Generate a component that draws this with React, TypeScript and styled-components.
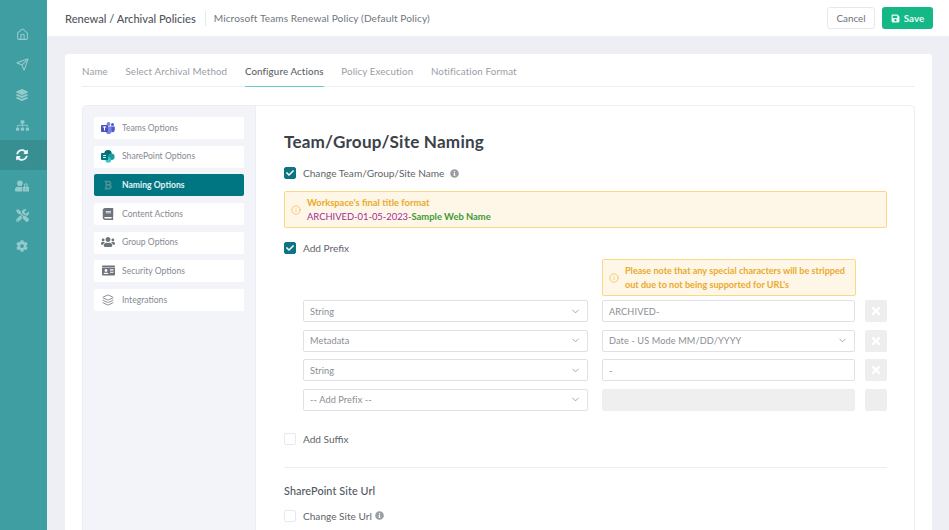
import React from "react";
import styled, { createGlobalStyle } from "styled-components";
import { FaSitemap, FaSyncAlt, FaUserLock, FaTools, FaCog, FaLayerGroup, FaBook, FaUsers, FaIdCard, FaBold, FaSave, FaTimes, FaInfoCircle, FaCheck } from "react-icons/fa";
import { Home, Send, Layers, ChevronDown, Info } from "lucide-react";

const GlobalStyle = createGlobalStyle`
  * { box-sizing: border-box; }
  html, body { margin: 0; padding: 0; background: #eeeff5; }
  body { font-family: "Lato", "Noto Sans", sans-serif; }
`;

const Page = styled.div`
  display: flex;
  width: 949px;
  height: 530px;
  overflow: hidden;
`;

const Rail = styled.nav`
  flex: 0 0 47px;
  background: #3e9ea1;
  padding-top: 19px;
  display: flex;
  flex-direction: column;
`;

const RailItem = styled.div<{ $active?: boolean }>`
  height: 30.3px;
  padding-right: 3px;
  display: flex;
  align-items: center;
  justify-content: center;
  background: ${(p) => (p.$active ? "#388f92" : "transparent")};
  color: ${(p) => (p.$active ? "#f2fafa" : "#93cacb")};
`;

const Main = styled.div`
  flex: 1;
  min-width: 0;
`;

const TopBar = styled.header`
  height: 36px;
  background: #fff;
  display: flex;
  align-items: center;
  padding: 0 16px 0 18px;
`;

const Crumb = styled.div`
  font-size: 11.1px;
  font-weight: 500;
  color: #50555c;
  padding-right: 9px;
  border-right: 1px solid #e6e7ea;
  line-height: 15px;
`;

const SubCrumb = styled.div`
  font-size: 10.1px;
  color: #70757c;
  margin-left: 8px;
  letter-spacing: 0.1px;
`;

const TopActions = styled.div`
  margin-left: auto;
  display: flex;
  gap: 7px;
`;

const CancelButton = styled.button`
  width: 48px;
  height: 22px;
  font: inherit;
  font-size: 9.8px;
  color: #6c7178;
  background: #fff;
  border: 1px solid #e7e8ee;
  border-radius: 3px;
  padding: 0;
`;

const SaveButton = styled.button`
  width: 51px;
  height: 22px;
  font: inherit;
  font-size: 9.8px;
  font-weight: 700;
  color: #eafaf4;
  background: #13b886;
  border: 0;
  border-radius: 3px;
  padding: 0;
  display: flex;
  align-items: center;
  justify-content: center;
  gap: 4px;
`;

const Card = styled.section`
  margin: 18px 17px 0 18px;
  background: #fff;
  border-radius: 3px;
  padding: 0 17px;
  height: 480px;
`;

const Tabs = styled.div`
  height: 33px;
  display: flex;
  gap: 17.7px;
  border-bottom: 1px solid #eceef1;
`;

const Tab = styled.div<{ $active?: boolean }>`
  height: 33px;
  padding-top: 10px;
  font-size: 9.75px;
  line-height: 14px;
  letter-spacing: 0.12px;
  color: ${(p) => (p.$active ? "#5c6269" : "#9a9ea4")};
  font-weight: ${(p) => (p.$active ? 500 : 400)};
  border-bottom: 1px solid ${(p) => (p.$active ? "#6fc8c4" : "transparent")};
`;

const Panel = styled.div`
  margin-top: 18px;
  display: flex;
  border: 1px solid #eceef2;
  border-radius: 4px;
  height: 430px;
`;

const SideMenu = styled.aside`
  flex: 0 0 172px;
  background: #f2f4f9;
  padding: 11px 11px 0 11px;
  display: flex;
  flex-direction: column;
  gap: 6.7px;
`;

const MenuItem = styled.div<{ $active?: boolean }>`
  height: 22px;
  padding-bottom: 1px;
  background: ${(p) => (p.$active ? "#017683" : "#fff")};
  color: ${(p) => (p.$active ? "#e4f2f3" : "#868b92")};
  font-weight: ${(p) => (p.$active ? 700 : 400)};
  border-radius: 2px;
  display: flex;
  align-items: center;
  font-size: 8.6px;
`;

const MenuIcon = styled.span`
  flex: 0 0 28px;
  display: flex;
  justify-content: center;
`;

const Content = styled.div`
  flex: 1;
  min-width: 0;
  padding: 25px 27px 0 28px;
  border-left: 1px solid #eceef2;
`;

const Title = styled.h1`
  margin: 0;
  font-size: 17.1px;
  line-height: 22px;
  font-weight: 700;
  letter-spacing: 0.2px;
  color: #3b4249;
`;

const CheckRow = styled.div<{ $mt: number }>`
  display: flex;
  align-items: center;
  gap: 7px;
  height: 14px;
  margin-top: ${(p) => p.$mt}px;
  font-size: 10.1px;
  color: #5f646b;
`;

const Box = styled.span<{ $on?: boolean }>`
  width: 12px;
  height: 12px;
  border-radius: 2px;
  display: flex;
  align-items: center;
  justify-content: center;
  color: #fff;
  background: ${(p) => (p.$on ? "#0b7583" : "#fff")};
  border: 1px solid ${(p) => (p.$on ? "#0b7583" : "#e8e9ee")};
`;

const Hint = styled.span<{ $tight?: boolean }>`
  display: inline-flex;
  color: #9a9ea3;
  margin-left: ${(p) => (p.$tight ? "-4px" : "-1px")};
`;

const Alert = styled.div`
  background: #fef6e6;
  border: 1px solid #fbd984;
  border-radius: 2px;
  display: flex;
  align-items: center;
  gap: 6px;
  color: #eaaa2e;
  font-weight: 700;
  line-height: 14px;
`;

const TitleAlert = styled(Alert)`
  height: 37px;
  margin-top: 11px;
  padding-left: 6px;
  font-size: 9.4px;
`;

const Purple = styled.span`
  color: #a32c9c;
  font-weight: 400;
`;

const Green = styled.span`
  color: #3d9b3a;
`;

const PrefixGrid = styled.div`
  display: grid;
  grid-template-columns: 285px 257px 22px;
  column-gap: 10px;
  row-gap: 7.5px;
  margin: 4px 0 0 19px;
`;

const NoteAlert = styled(Alert)`
  grid-column: 2;
  height: 37px;
  margin-left: 4px;
  margin-right: -1px;
  padding-left: 6px;
  margin-bottom: -3.5px;
  font-size: 9.1px;
  white-space: nowrap;
`;

const Control = styled.div<{ $disabled?: boolean }>`
  height: 22px;
  border: 1px solid ${(p) => (p.$disabled ? "#efefef" : "#dfe1e6")};
  background: ${(p) => (p.$disabled ? "#efefef" : "#fff")};
  border-radius: 2px;
  padding: 0 6px;
  display: flex;
  align-items: center;
  justify-content: space-between;
  color: #8a8e94;
  font-size: 9.2px;
  letter-spacing: 0.1px;
  white-space: nowrap;
`;

const ValueControl = styled(Control)`
  margin-left: 4px;
`;

const RemoveButton = styled.div`
  height: 22px;
  background: #eeeeee;
  border-radius: 2px;
  display: flex;
  align-items: center;
  justify-content: center;
  color: #fff;
`;

const Divider = styled.hr`
  border: 0;
  border-top: 1px solid #eceef0;
  margin: 21px 0 0 0;
`;

const SubTitle = styled.h2`
  margin: 15px 0 0;
  font-size: 10.8px;
  line-height: 15px;
  font-weight: 500;
  color: #50565d;
  letter-spacing: 0.1px;
`;

const TeamsLogo = () => (
  <svg width="14" height="12" viewBox="0 0 14 12">
    <circle cx="7.5" cy="2" r="1.9" fill="#7b83eb" />
    <circle cx="11.5" cy="2.6" r="1.5" fill="#5059c9" />
    <path d="M9.5 4.5h4.3v3.6a2.2 2.2 0 0 1-4.3.5z" fill="#5059c9" />
    <path d="M4 4.5h6.6v4.6a2.9 2.9 0 0 1-5.8.2z" fill="#7b83eb" />
    <rect x="0" y="3" width="7" height="7" rx="0.8" fill="#4b53bc" />
    <rect x="1.8" y="4.5" width="3.4" height="1" fill="#fff" />
    <rect x="3" y="4.5" width="1" height="4" fill="#fff" />
  </svg>
);

const SharePointLogo = () => (
  <svg width="14" height="13" viewBox="0 0 14 13">
    <circle cx="7" cy="3.7" r="3.7" fill="#036c70" />
    <circle cx="10.3" cy="6.8" r="3.3" fill="#1a9ba1" />
    <circle cx="7.2" cy="10" r="2.8" fill="#37c6d0" />
    <rect x="0" y="3" width="7" height="7" rx="0.8" fill="#03787c" />
    <rect x="2.2" y="5" width="2.6" height="1" fill="#fff" />
    <rect x="2.2" y="7" width="2.6" height="1" fill="#fff" />
  </svg>
);

const railIcons = [
  <Home size={13} />,
  <Send size={13} />,
  <FaLayerGroup size={12} />,
  <FaSitemap size={13} />,
  <FaSyncAlt size={12} />,
  <FaUserLock size={14} />,
  <FaTools size={13} />,
  <FaCog size={12} />,
];

const menu = [
  { label: "Teams Options", icon: <TeamsLogo /> },
  { label: "SharePoint Options", icon: <SharePointLogo /> },
  { label: "Naming Options", icon: <FaBold size={10} color="#4f8f98" />, active: true },
  { label: "Content Actions", icon: <FaBook size={12} color="#6d747c" /> },
  { label: "Group Options", icon: <FaUsers size={14} color="#6d747c" /> },
  { label: "Security Options", icon: <FaIdCard size={13} color="#6d747c" /> },
  { label: "Integrations", icon: <Layers size={12} color="#8b9096" /> },
];

const tabs = ["Name", "Select Archival Method", "Configure Actions", "Policy Execution", "Notification Format"];

const rows = [
  { type: "String", value: "ARCHIVED-" },
  { type: "Metadata", value: "Date - US Mode MM/DD/YYYY", select: true },
  { type: "String", value: "-" },
  { type: "-- Add Prefix --", value: "", disabled: true },
];

const Chevron = () => <ChevronDown size={11} color="#9a9ea4" />;

const Check = ({ on }: { on?: boolean }) => (
  <Box $on={on}>{on && <FaCheck size={8} />}</Box>
);

export default function App() {
  return (
    <Page>
      <GlobalStyle />
      <Rail>
        {railIcons.map((icon, i) => (
          <RailItem key={i} $active={i === 4}>
            {icon}
          </RailItem>
        ))}
      </Rail>
      <Main>
        <TopBar>
          <Crumb>Renewal / Archival Policies</Crumb>
          <SubCrumb>Microsoft Teams Renewal Policy (Default Policy)</SubCrumb>
          <TopActions>
            <CancelButton>Cancel</CancelButton>
            <SaveButton>
              <FaSave size={9} />
              Save
            </SaveButton>
          </TopActions>
        </TopBar>
        <Card>
          <Tabs>
            {tabs.map((t) => (
              <Tab key={t} $active={t === "Configure Actions"}>
                {t}
              </Tab>
            ))}
          </Tabs>
          <Panel>
            <SideMenu>
              {menu.map((m) => (
                <MenuItem key={m.label} $active={m.active}>
                  <MenuIcon>{m.icon}</MenuIcon>
                  {m.label}
                </MenuItem>
              ))}
            </SideMenu>
            <Content>
              <Title>Team/Group/Site Naming</Title>
              <CheckRow $mt={13}>
                <Check on />
                Change Team/Group/Site Name
                <Hint>
                  <FaInfoCircle size={9} />
                </Hint>
              </CheckRow>
              <TitleAlert>
                <Info size={10} color="#f3c35f" />
                <div>
                  Workspace's final title format
                  <br />
                  <Purple>ARCHIVED-01-05-2023-</Purple>
                  <Green>Sample Web Name</Green>
                </div>
              </TitleAlert>
              <CheckRow $mt={13}>
                <Check on />
                Add Prefix
              </CheckRow>
              <PrefixGrid>
                <NoteAlert>
                  <Info size={10} color="#f3c35f" />
                  <div>
                    Please note that any special characters will be stripped
                    <br />
                    out due to not being supported for URL's
                  </div>
                </NoteAlert>
                <span />
                {rows.map((r, i) => (
                  <React.Fragment key={i}>
                    <Control>
                      {r.type}
                      <Chevron />
                    </Control>
                    <ValueControl $disabled={r.disabled}>
                      {r.value}
                      {r.select && <Chevron />}
                    </ValueControl>
                    <RemoveButton>{!r.disabled && <FaTimes size={12} />}</RemoveButton>
                  </React.Fragment>
                ))}
              </PrefixGrid>
              <CheckRow $mt={21}>
                <Check />
                Add Suffix
              </CheckRow>
              <Divider />
              <SubTitle>SharePoint Site Url</SubTitle>
              <CheckRow $mt={11}>
                <Check />
                Change Site Url
                <Hint $tight>
                  <FaInfoCircle size={9} />
                </Hint>
              </CheckRow>
            </Content>
          </Panel>
        </Card>
      </Main>
    </Page>
  );
}
